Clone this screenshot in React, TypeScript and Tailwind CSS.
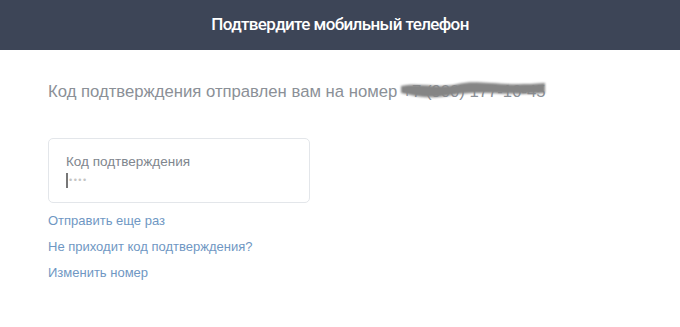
import React from "react";

const links = ["Отправить еще раз", "Не приходит код подтверждения?", "Изменить номер"];

export default function App() {
  return (
    <div className="min-h-[327px] w-full bg-white" style={{ fontFamily: '"Liberation Sans", Arial, sans-serif' }}>
      <header className="flex h-[50px] items-center justify-center bg-[#3d4557]">
        <h1 className="text-[17px] font-medium tracking-[-0.6px] text-white" style={{ fontFamily: "Roboto, sans-serif" }}>
          Подтвердите мобильный телефон
        </h1>
      </header>

      <div className="px-[48px] pt-[29px]">
        <p className="flex items-center text-[16.7px] text-[#8b9097]">
          Код подтверждения отправлен вам на номер
          <span className="relative ml-[5px] text-[#8b9097]">
            +7 (900) 177-10-45
            <svg className="absolute left-[-4px] top-[-2px]" width="150" height="24" viewBox="0 0 150 24">
              <path
                d="M3 9 C20 5, 40 12, 60 7 S100 10, 147 6 L147 16 C110 19, 80 13, 55 18 S18 19, 3 16 Z"
                fill="#858585"
                style={{ filter: "blur(1px)" }}
              />
            </svg>
          </span>
        </p>

        <div className="mt-[34px] flex h-[65px] w-[262px] flex-col rounded-[5px] border border-[#e3e6ea] pl-[17px] pt-[15px]">
          <label className="text-[13.5px] leading-[16px] text-[#80868e]">Код подтверждения</label>
          <div className="mt-[3px] flex items-center">
            <span className="h-[15px] w-[2px] bg-[#777]" />
            <span className="ml-[1px] text-[9px] tracking-[1.5px] text-[#c4c4c4]">••••</span>
          </div>
        </div>

        <div className="mt-[10px] flex flex-col gap-[10px]">
          {links.map((l) => (
            <a key={l} href="#" className="text-[13px] leading-[16px] text-[#6f97c3]">
              {l}
            </a>
          ))}
        </div>
      </div>
    </div>
  );
}
